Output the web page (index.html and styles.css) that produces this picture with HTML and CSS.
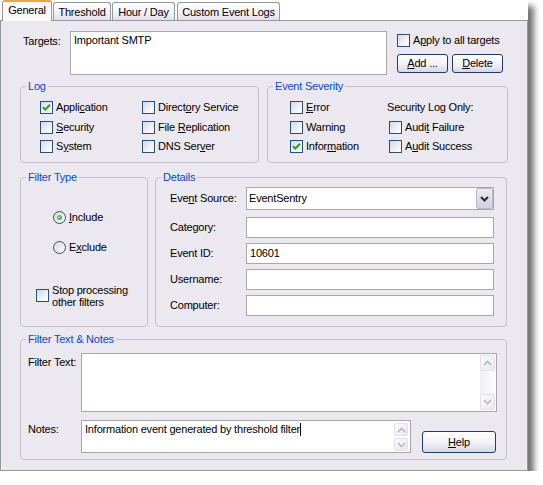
FILE: index.html
```html
<!DOCTYPE html>
<html>
<head>
<meta charset="utf-8">
<link rel="stylesheet" href="styles.css">
</head>
<body>
<div class="window">
  <div class="tabs">
    <div class="tab active">General</div>
    <div class="tab t-threshold">Threshold</div>
    <div class="tab t-hour">Hour / Day</div>
    <div class="tab t-custom">Custom Event Logs</div>
  </div>
  <div class="panel">
    <div class="targets-row">
      <div class="lbl targets-lbl">Targets:</div>
      <div class="textbox targets-box">Important SMTP</div>
      <div class="targets-side">
        <div class="chk"><span class="box"></span><span>A<u>p</u>ply to all targets</span></div>
        <div class="btns">
          <div class="btn btn-add"><u>A</u>dd ...</div>
          <div class="btn btn-del"><u>D</u>elete</div>
        </div>
      </div>
    </div>

    <div class="row row-log">
      <div class="group g-log">
        <div class="gtitle">Log</div>
        <div class="cgrid log-grid">
          <div class="chk"><span class="box checked"><svg viewBox="0 0 11 11" width="11" height="11"><path d="M2 5.2 L4.3 7.5 L9 2.8" fill="none" stroke="#21a121" stroke-width="2"/></svg></span><span>Appli<u>c</u>ation</span></div>
          <div class="chk"><span class="box"></span><span>Direct<u>o</u>ry Service</span></div>
          <div class="chk"><span class="box"></span><span><u>S</u>ecurity</span></div>
          <div class="chk"><span class="box"></span><span>File <u>R</u>eplication</span></div>
          <div class="chk"><span class="box"></span><span>S<u>y</u>stem</span></div>
          <div class="chk"><span class="box"></span><span>DNS Ser<u>v</u>er</span></div>
        </div>
      </div>
      <div class="group g-sev">
        <div class="gtitle">Event Severity</div>
        <div class="cgrid sev-grid">
          <div class="chk"><span class="box"></span><span><u>E</u>rror</span></div>
          <div class="sec-only">Security Log Only:</div>
          <div class="chk"><span class="box"></span><span>Warning</span></div>
          <div class="chk"><span class="box"></span><span>Audi<u>t</u> Failure</span></div>
          <div class="chk"><span class="box checked"><svg viewBox="0 0 11 11" width="11" height="11"><path d="M2 5.2 L4.3 7.5 L9 2.8" fill="none" stroke="#21a121" stroke-width="2"/></svg></span><span>Infor<u>m</u>ation</span></div>
          <div class="chk"><span class="box"></span><span>A<u>u</u>dit Success</span></div>
        </div>
      </div>
    </div>

    <div class="row row-filter">
      <div class="group g-type">
        <div class="gtitle">Filter Type</div>
        <div class="type-body">
          <div class="radio-item r-include"><span class="radio on"><span class="dot"></span></span><span><u>I</u>nclude</span></div>
          <div class="radio-item r-exclude"><span class="radio"></span><span>E<u>x</u>clude</span></div>
          <div class="chk stop"><span class="box"></span><span class="stop-text">Stop processing<br>other filters</span></div>
        </div>
      </div>
      <div class="group g-details">
        <div class="gtitle">Details</div>
        <div class="details-body">
          <div class="frow r-source">
            <div class="flbl">Eve<u>n</u>t Source:</div>
            <div class="select">
              <span class="select-text">EventSentry</span>
              <span class="drop"><svg viewBox="0 0 9 6" width="9" height="6"><path d="M1 1 L4.5 4.5 L8 1" fill="none" stroke="#2a2a3a" stroke-width="2"/></svg></span>
            </div>
          </div>
          <div class="frow r-cat"><div class="flbl">Category:</div><div class="textbox field"></div></div>
          <div class="frow r-field"><div class="flbl">Event ID:</div><div class="textbox field">10601</div></div>
          <div class="frow r-field"><div class="flbl">Username:</div><div class="textbox field"></div></div>
          <div class="frow r-field"><div class="flbl">Computer:</div><div class="textbox field"></div></div>
        </div>
      </div>
    </div>

    <div class="group g-notes">
      <div class="gtitle">Filter Text &amp; Notes</div>
      <div class="notes-body">
        <div class="nrow">
          <div class="nlbl">Filter Text:</div>
          <div class="textbox area-filter">
            <div class="area-content"></div>
            <div class="vscroll">
              <span class="sbtn"><svg viewBox="0 0 9 6" width="9" height="6"><path d="M1 5 L4.5 1.5 L8 5" fill="none" stroke="#b4b8c6" stroke-width="1.6"/></svg></span>
              <span class="strack"></span>
              <span class="sbtn"><svg viewBox="0 0 9 6" width="9" height="6"><path d="M1 1 L4.5 4.5 L8 1" fill="none" stroke="#b4b8c6" stroke-width="1.6"/></svg></span>
            </div>
          </div>
        </div>
        <div class="nrow r-notes">
          <div class="nlbl">Notes:</div>
          <div class="textbox area-notes">
            <div class="area-content">Information event generated by threshold filter<span class="caret"></span></div>
            <div class="vscroll small">
              <span class="sbtn"><svg viewBox="0 0 9 6" width="9" height="6"><path d="M1 5 L4.5 1.5 L8 5" fill="none" stroke="#b4b8c6" stroke-width="1.6"/></svg></span>
              <span class="sbtn"><svg viewBox="0 0 9 6" width="9" height="6"><path d="M1 1 L4.5 4.5 L8 1" fill="none" stroke="#b4b8c6" stroke-width="1.6"/></svg></span>
            </div>
          </div>
          <div class="btn btn-help"><u>H</u>elp</div>
        </div>
      </div>
    </div>
  </div>
</div>
</body>
</html>
```
FILE: styles.css
```css
* { box-sizing: border-box; }
html, body { margin: 0; padding: 0; background: #ffffff; }
body {
  font-family: "Liberation Sans", Arial, sans-serif;
  font-size: 11px;
  letter-spacing: -0.2px;
  color: #000;
  line-height: 13px;
}
u { text-decoration: underline; text-underline-offset: 1px; }

.window {
  width: 528px;
  height: 471px;
  background: #ffffff;
  box-shadow: 6px 6px 6px rgba(0, 0, 0, 0.55);
}

/* Tabs */
.tabs {
  display: flex;
  align-items: flex-end;
  height: 20px;
  padding-left: 2px;
}
.tab {
  height: 18px;
  border: 1px solid #919b9c;
  border-bottom: none;
  border-radius: 3px 3px 0 0;
  background: linear-gradient(#ffffff, #f2f0f5 60%, #e2dfe8);
  display: flex;
  align-items: center;
  justify-content: center;
  padding-top: 1px;
  white-space: nowrap;
}
.tab.active {
  position: relative;
  z-index: 1;
  width: 50px;
  height: 21px;
  margin-bottom: -1px;
  background: #fbfbfd;
  border-top: 2px solid #f2a53a;
  padding-top: 0;
  padding-bottom: 2px;
}
.t-threshold { width: 58px; margin-left: 1px; }
.t-hour { width: 63px; margin-left: 1px; }
.t-custom { width: 103px; margin-left: 2px; }

/* Panel */
.panel {
  width: 528px;
  height: 451px;
  border: 1px solid #919b9c;
  background: #ebe8ef;
  padding-top: 10px;
}

.textbox {
  background: #ffffff;
  border: 1px solid #a7a7b0;
  padding: 2px 3px;
  white-space: nowrap;
}

/* Targets */
.targets-row {
  display: flex;
  padding-left: 22px;
}
.targets-lbl { width: 47px; padding-top: 4px; }
.targets-box { width: 317px; height: 44px; }
.targets-side {
  margin-left: 10px;
  padding-top: 3px;
  display: flex;
  flex-direction: column;
}
.btns { display: flex; gap: 4px; margin-top: 7px; }
.btn {
  height: 19px;
  border: 1px solid #1d3f70;
  border-radius: 3px;
  background: linear-gradient(#ffffff, #f3f1f6 55%, #d9d5e1);
  display: flex;
  align-items: center;
  justify-content: center;
}
.btn-add, .btn-del { width: 51px; }

/* checkbox */
.chk { display: flex; align-items: center; gap: 3px; height: 13px; white-space: nowrap; }
.box {
  width: 13px;
  height: 13px;
  flex: none;
  border: 1px solid #24507e;
  background: linear-gradient(135deg, #d8d6de 0%, #f2f1f4 60%, #ffffff 100%);
  display: flex;
  align-items: center;
  justify-content: center;
}

/* Groups */
.row { display: flex; padding-left: 19px; }
.row-log { margin-top: 11px; gap: 8px; }
.row-filter { margin-top: 14px; gap: 7px; }
.group {
  position: relative;
  border: 1px solid #c3c0c9;
  border-radius: 4px;
}
.gtitle {
  position: absolute;
  top: -7px;
  left: 5px;
  padding: 0 2px;
  background: #ebe8ef;
  color: #0a46d2;
  line-height: 13px;
  white-space: nowrap;
}
.g-log { width: 239px; height: 77px; }
.g-sev { width: 241px; height: 77px; }
.cgrid {
  display: grid;
  grid-auto-rows: 13px;
  row-gap: 6.5px;
  padding-top: 14px;
}
.log-grid { grid-template-columns: 102px auto; padding-left: 19px; }
.sev-grid { grid-template-columns: 99px auto; padding-left: 22px; }
.sec-only { margin-left: -2px; white-space: nowrap; }

.g-type { width: 128px; height: 150px; }
.g-details { width: 352px; height: 150px; }

.type-body {
  display: flex;
  flex-direction: column;
  padding-top: 33px;
}
.radio-item { display: flex; align-items: center; gap: 3px; height: 13px; margin-left: 32px; }
.r-exclude { margin-top: 16.5px; }
.radio {
  width: 13px;
  height: 13px;
  border-radius: 50%;
  border: 1px solid #2d4f78;
  background: linear-gradient(135deg, #d6d4dc, #ffffff);
  display: flex;
  align-items: center;
  justify-content: center;
  flex: none;
}
.dot {
  width: 5px;
  height: 5px;
  border-radius: 50%;
  background: radial-gradient(circle at 40% 40%, #7fe07f, #1e9e1e);
}
.stop { margin-left: 15px; margin-top: 30px; height: 24px; }
.stop-text { line-height: 12px; }

.details-body {
  padding: 9px 0 0 14px;
  display: flex;
  flex-direction: column;
}
.frow { display: flex; align-items: center; }
.flbl { width: 76px; white-space: nowrap; }
.select {
  width: 248px;
  height: 23px;
  border: 1px solid #a7a7b0;
  background: #fff;
  display: flex;
  align-items: center;
}
.select-text { flex: 1; padding-left: 2px; }
.drop {
  width: 17px;
  height: 21px;
  border: 1px solid #b9b8c8;
  border-radius: 2px;
  background: linear-gradient(#ecebf3, #d3d0de);
  display: flex;
  align-items: center;
  justify-content: center;
}
.field { width: 248px; height: 21px; padding: 3px 3px; }
.r-cat { margin-top: 7px; }
.r-field { margin-top: 5px; }

/* Notes */
.g-notes { margin-left: 19px; margin-top: 12px; width: 487px; height: 121px; }
.notes-body { padding: 13px 0 0 7px; display: flex; flex-direction: column; }
.nrow { display: flex; }
.nlbl { width: 53px; padding-top: 3px; white-space: nowrap; }
.r-notes { margin-top: 8px; }
.area-filter, .area-notes {
  display: flex;
  padding: 1px 1px 1px 3px;
}
.area-filter { width: 416px; height: 59px; }
.area-notes { width: 330px; height: 33px; padding-right: 2px; }
.area-content { flex: 1; padding-top: 1px; }
.caret {
  display: inline-block;
  width: 1px;
  height: 13px;
  background: #000;
  vertical-align: top;
}
.vscroll {
  width: 15px;
  display: flex;
  flex-direction: column;
  background: linear-gradient(90deg, #eeeef6, #fbfbff);
}
.vscroll.small {
  width: 14px;
  gap: 2px;
  padding-top: 1px;
  background: transparent;
}
.strack { flex: 1; }
.sbtn {
  height: 16px;
  border: 1px solid #e2e0e6;
  border-radius: 2px;
  background: linear-gradient(135deg, #fafafc, #e9e8ee);
  display: flex;
  align-items: center;
  justify-content: center;
}
.vscroll.small .sbtn { height: 13px; }
.btn-help {
  width: 74px;
  height: 22px;
  margin-left: 11px;
  align-self: flex-end;
  border-color: #1d3f70;
}
```
